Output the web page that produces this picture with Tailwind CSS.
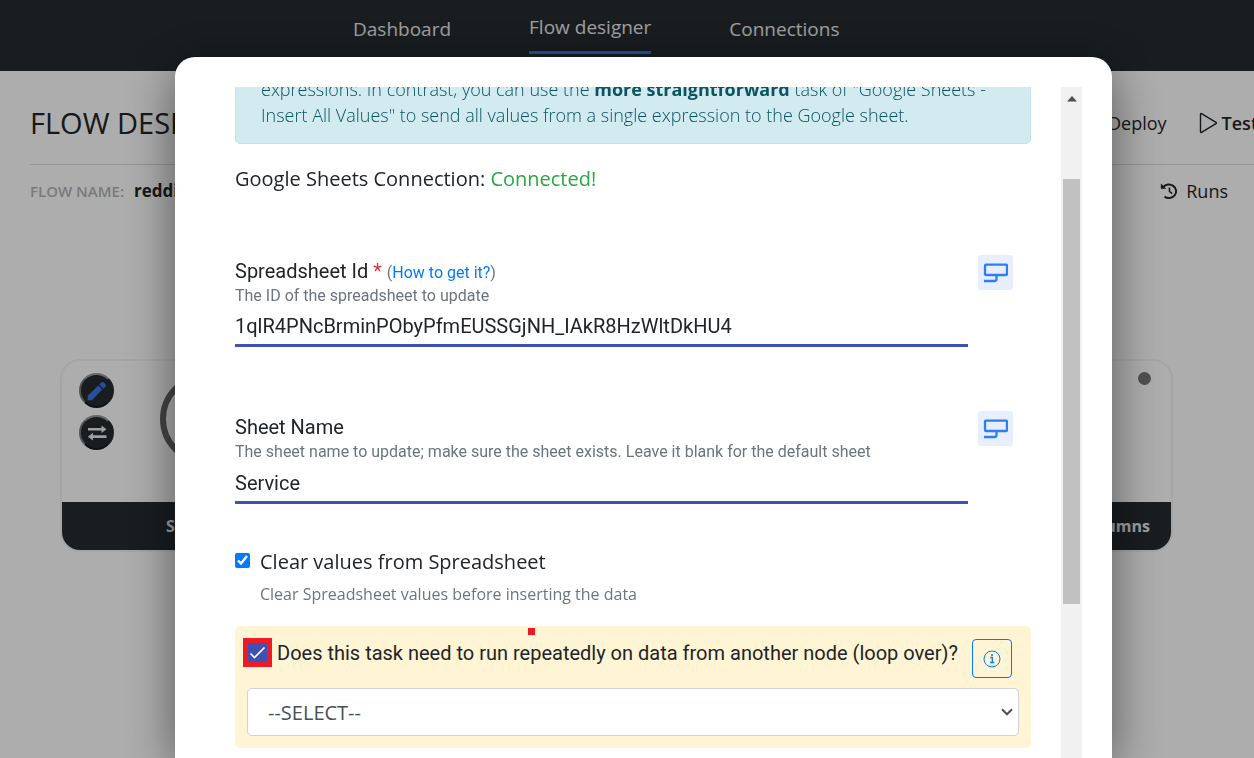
<!DOCTYPE html>
<html lang="en">
<head>
<meta charset="utf-8">
<title>Flow designer</title>
<script src="https://cdn.jsdelivr.net/npm/@tailwindcss/browser@4"></script>
</head>
<body class="h-screen overflow-hidden bg-white font-['Open_Sans',sans-serif] text-[#212529]">

<div class="flex h-screen flex-col overflow-hidden">
  <nav class="flex h-[71px] shrink-0 items-start gap-[78px] bg-[#252b2f] pl-[353px] text-[19px] leading-[26px] text-[#ebebeb]">
    <a href="#" class="mt-4">Dashboard</a>
    <a href="#" class="mt-[14px] border-b-3 border-[#3976eb] pb-[11px]">Flow designer</a>
    <a href="#" class="mt-4">Connections</a>
  </nav>

  <main class="flex-1 whitespace-nowrap pl-[30px]">
    <header class="flex h-[94px] items-center justify-between border-b border-[#dadae4] pt-[11px]">
      <h1 class="text-[29px] font-medium">FLOW DESIGNER</h1>
      <div class="-mr-1 flex items-center gap-8 text-[18px] font-medium">
        <button type="button">Deploy</button>
        <button type="button" class="flex items-center gap-1 font-semibold">
          <svg class="h-[22px] w-[19px]" viewBox="0 0 19 22" fill="none" stroke="currentColor" stroke-width="1.4" stroke-linejoin="round"><path d="M1.5 2.2v17.6q0 1 1 .5L17 11.6q.8-.6 0-1.2L2.500 1.700q-1-.5-1 .5z"/></svg>
          Test
        </button>
      </div>
    </header>
    <div class="flex h-[52px] items-center justify-between pr-[26px]">
      <p class="flex items-center gap-[10px]"><span class="text-[15px] font-semibold text-[#b4b4b4]">FLOW NAME:</span><span class="text-[17px] font-bold">reddit</span></p>
      <button type="button" class="flex items-center gap-2 text-[18px]">
        <svg class="size-[18px]" viewBox="0 0 20 20" fill="none" stroke="currentColor" stroke-width="2.200"><path d="M3.500 5.800A8 7.500 0 1 1 5 16.200"/><path d="M10.500 6v4.500l3 2.300" stroke-width="1.700"/><path d="M1 1.700v5.800h6z" fill="currentColor" stroke="none"/></svg>
        Runs
      </button>
    </div>

    <div class="mt-[142px] mr-[81px] ml-[30px] flex justify-between text-[16px] font-bold text-[#ebebeb]">
      <section class="flex h-[193px] w-[292px] flex-col overflow-hidden rounded-[20px] border-2 border-[#f4f4f4]">
        <div class="flex flex-1 items-start gap-[46px] pt-[12px] pl-[17px]">
          <div class="flex flex-col gap-[7px]">
            <button type="button" aria-label="Edit" class="flex size-[35px] items-center justify-center rounded-full border-2 border-t-[#999] border-r-[#252b2f] border-b-[#15191c] border-l-[#777] bg-[#252b2f]">
              <svg class="size-5 fill-[#3976eb]" viewBox="0 0 20 20"><path d="M.7 15l10.600-10.500 4 4L4.800 19.300H.7zM12.300 3.600l2-2q1.200-1.200 2.500 0l1.700 1.700q1.200 1.200 0 2.500l-2.100 2z"/></svg>
            </button>
            <button type="button" aria-label="Swap" class="flex size-[35px] items-center justify-center rounded-full border-2 border-t-[#999] border-r-[#252b2f] border-b-[#15191c] border-l-[#777] bg-[#252b2f]">
              <svg class="size-5 fill-[#ebebeb]" viewBox="0 0 20 20"><path d="M1 5h13.500V2.500L19.500 6.200 14.500 10V7.500H1zM19.500 12.300H6V9.800L.8 13.700 6 17.500V15h13.500z"/></svg>
            </button>
          </div>
          <div class="size-[92px] rounded-full border-[6px] border-[#666]"></div>
        </div>
        <footer class="flex h-12 items-center bg-[#252b2f] pl-[104px]">Start</footer>
      </section>
      <section class="flex h-[193px] w-[292px] flex-col overflow-hidden rounded-[20px] border-2 border-[#f4f4f4]">
        <div class="flex flex-1 justify-end pt-[11px] pr-5"><span class="size-[13px] rounded-full bg-[#777]"></span></div>
        <footer class="flex h-12 items-center justify-end bg-[#252b2f] pr-[21px]">Columns</footer>
      </section>
    </div>
  </main>
</div>

<div class="fixed inset-0 flex bg-black/32 pt-[57px] pr-[142px] pl-[175px]">
  <div role="dialog" aria-label="Task settings" class="flex flex-1 overflow-hidden rounded-t-[20px] bg-white pt-[30px] pr-[30px] pl-[60px] shadow-[0_10px_50px_rgba(0,0,0,0.5)]">
    <div class="min-w-0 flex-1 overflow-hidden pr-[30px]">
      <div class="-mt-[25px] rounded-[5px] border border-[#bee5eb] bg-[#d1ebf0] px-[25px] pt-[13px] pb-[15px] text-[18px] leading-[26px] font-light text-[#0c5460]">
        expressions. In contrast, you can use the <strong class="font-bold">more straightforward</strong> task of "Google Sheets - Insert All Values" to send all values from a single expression to the Google sheet.
      </div>

      <p class="mt-5 text-[20px] leading-[30px]">Google Sheets Connection: <span class="text-[#28a745]">Connected!</span></p>

      <div class="mt-[61px] flex gap-[10px] pr-[18px] font-['Roboto',sans-serif]">
        <div class="min-w-0 flex-1">
          <p class="text-[20px] leading-[33px]"><label for="sheet-id">Spreadsheet Id</label> <span class="text-[#dc3545]">*</span> <span class="text-[16px] leading-none text-[#6c757d]">(<a href="#" class="text-[#007bff]">How to get it?</a>)</span></p>
          <p class="text-[16px] leading-4 text-[#6c757d]">The ID of the spreadsheet to update</p>
          <input id="sheet-id" type="text" value="1qlR4PNcBrminPObyPfmEUSSGjNH_IAkR8HzWltDkHU4" class="block h-[43px] w-full border-b-3 border-[#3f51b5] pt-1 text-[20px] outline-none">
        </div>
        <button type="button" aria-label="Insert expression" class="flex size-[35px] items-center justify-center rounded-[3px] bg-[#e7efff]">
          <svg class="size-[25px]" viewBox="0 0 25 25" fill="none" stroke="#2f7df6" stroke-width="2.300"><rect x="2" y="4.700" width="22" height="10.300" rx="1"/><path d="M13.500 15v4q0 2-2 2H1"/></svg>
        </button>
      </div>

      <div class="mt-16 flex gap-[10px] pr-[18px] font-['Roboto',sans-serif]">
        <div class="min-w-0 flex-1">
          <p class="text-[20px] leading-[33px]"><label for="sheet-name">Sheet Name</label></p>
          <p class="text-[16px] leading-4 text-[#6c757d]">The sheet name to update; make sure the sheet exists. Leave it blank for the default sheet</p>
          <input id="sheet-name" type="text" value="Service" class="block h-11 w-full border-b-3 border-[#3f51b5] pt-1 text-[20px] outline-none">
        </div>
        <button type="button" aria-label="Insert expression" class="flex size-[35px] items-center justify-center rounded-[3px] bg-[#e7efff]">
          <svg class="size-[25px]" viewBox="0 0 25 25" fill="none" stroke="#2f7df6" stroke-width="2.300"><rect x="2" y="4.700" width="22" height="10.300" rx="1"/><path d="M13.500 15v4q0 2-2 2H1"/></svg>
        </button>
      </div>

      <div class="mt-[43px] flex gap-[10px]">
        <input id="clear" type="checkbox" checked class="mt-[6px] size-[15px] accent-[#007bff]">
        <div>
          <label for="clear" class="block text-[20px] leading-[30px]">Clear values from Spreadsheet</label>
          <p class="mt-[5px] text-[16px] leading-6 text-[#6c757d]">Clear Spreadsheet values before inserting the data</p>
        </div>
      </div>

      <div class="relative mt-5 rounded-[5px] bg-[#fff4d3] px-3 pt-3 pb-3">
        <span class="absolute top-[2px] left-[293px] size-[7px] bg-[#ed1c24]"></span>
        <div class="-ml-1 flex items-start justify-between pr-[7px]">
          <div class="flex gap-[5px]">
            <span class="relative grid size-[29px] place-items-center border-[5px] border-[#ed1c24] bg-[#3f51b5]">
              <input id="loop" type="checkbox" checked class="col-start-1 row-start-1 size-[19px] appearance-none bg-[#3f51b5]">
              <svg class="pointer-events-none col-start-1 row-start-1 size-[19px]" viewBox="0 0 19 19" fill="none" stroke="#fff" stroke-width="1.700"><path d="M2.500 10.500l4 4L16.500 4.500"/></svg>
            </span>
            <label for="loop" class="font-['Roboto',sans-serif] text-[20px] leading-[30px]">Does this task need to run repeatedly on data from another node (loop over)?</label>
          </div>
          <button type="button" aria-label="Information" class="mt-px flex h-[39px] w-10 items-center justify-center rounded-[4px] border border-[#007bff]">
            <svg class="size-[18px]" viewBox="0 0 18 18" fill="none" stroke="#007bff"><circle cx="9" cy="9" r="8"/><path d="M7.300 7.500h2v5M7 12.500h4.300" stroke-width="1.300"/><circle cx="9" cy="5" r="1" fill="#007bff" stroke="none"/></svg>
          </button>
        </div>
        <div class="relative mt-[10px] text-[#495057]">
          <select aria-label="Loop over node" class="h-12 w-full appearance-none rounded-[5px] border border-[#ced4da] bg-white pt-[2px] pl-5 text-[20px]"><option>--SELECT--</option></select>
          <svg class="pointer-events-none absolute top-5 right-[6px] h-2 w-3" viewBox="0 0 12 8" fill="none" stroke="currentColor" stroke-width="2"><path d="M1 1.300l5 5 5-5"/></svg>
        </div>
      </div>
    </div>

    <div class="flex w-[21px] shrink-0 flex-col items-center bg-[#f1f1f1]" aria-hidden="true">
      <svg class="mt-[9px] h-[6px] w-[10px] fill-[#505050]" viewBox="0 0 10 6"><path d="M5 0l5 5.500H0z"/></svg>
      <div class="mt-[77px] h-[425px] w-[17px] bg-[#c1c1c1]"></div>
    </div>
  </div>
</div>
</body>
</html>
